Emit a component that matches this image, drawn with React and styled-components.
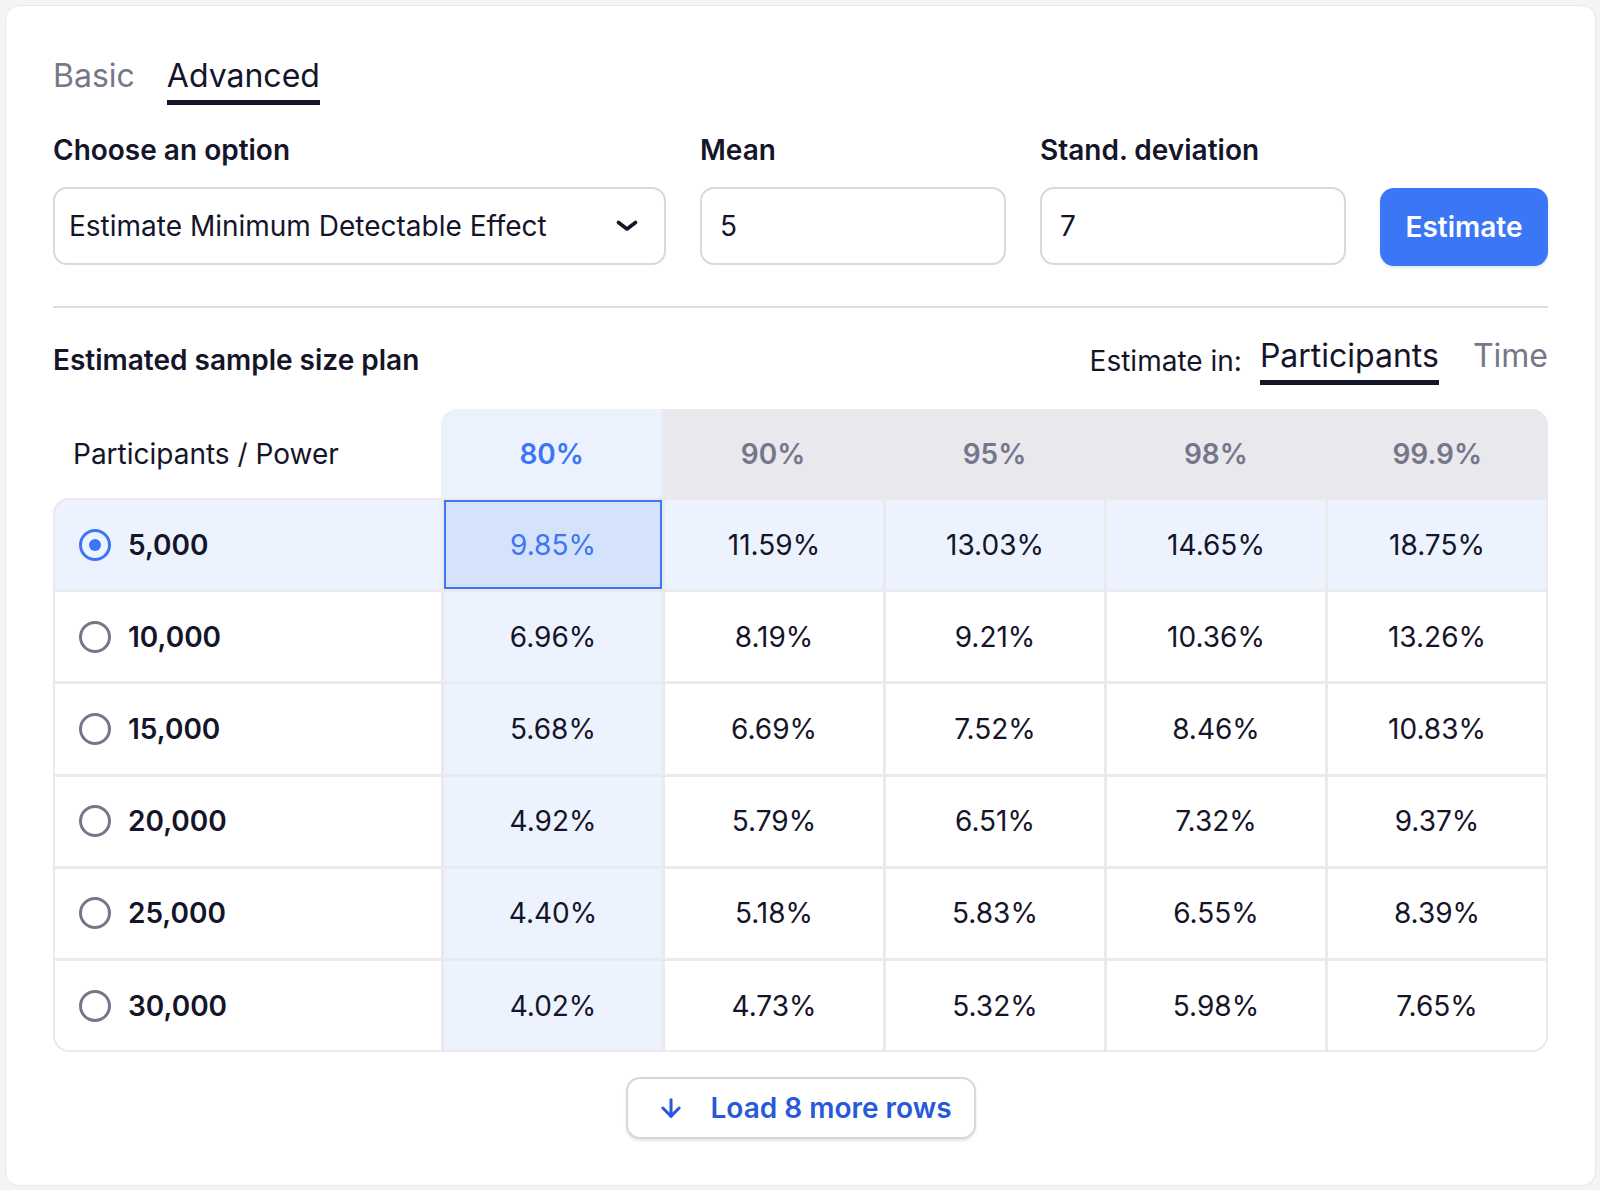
import React, { useState } from 'react'
import styled, { createGlobalStyle } from 'styled-components'
import { ArrowDown } from 'lucide-react'

const GlobalStyle = createGlobalStyle`
  html, body {
    margin: 0;
    padding: 0;
    background: #f4f4f6;
  }
  body {
    font-family: Inter, "Noto Sans", sans-serif;
    color: #15152a;
    -webkit-font-smoothing: antialiased;
  }
  * {
    box-sizing: border-box;
  }
`

const Card = styled.div`
  margin: 5px 4px 4px 5px;
  width: 1591px;
  height: 1181px;
  background: #fff;
  border: 1px solid #e7e7ec;
  border-radius: 14px;
  padding: 50px 47px 0;
`

const TabRow = styled.div`
  display: flex;
  align-items: center;
  gap: ${p => p.gap ?? 32}px;
  margin-bottom: ${p => p.mb ?? 0}px;
`

const Tab = styled.button`
  font: inherit;
  font-size: 32px;
  line-height: 40px;
  background: none;
  border: none;
  padding: 0 0 4px;
  margin: 0;
  cursor: pointer;
  border-bottom: 5px solid ${p => (p.active ? '#15152a' : 'transparent')};
  color: ${p => (p.active ? '#15152a' : '#777789')};
`

const FormGrid = styled.div`
  display: grid;
  grid-template-columns: 613px 306px 306px 1fr;
  column-gap: 34px;
  align-items: end;
`

const Label = styled.div`
  font-size: 28px;
  font-weight: 600;
  line-height: 34px;
  margin-bottom: 20px;
`

const Field = styled.div`
  display: flex;
  flex-direction: column;
`

const SelectBox = styled.div`
  height: 78px;
  border: 2px solid #d8d8de;
  border-radius: 14px;
  display: flex;
  align-items: center;
  justify-content: space-between;
  padding: 0 26px 0 14px;
  font-size: 28px;
  cursor: pointer;
`

const Input = styled.input`
  height: 78px;
  width: 100%;
  border: 2px solid #d8d8de;
  border-radius: 14px;
  padding: 0 18px;
  font: inherit;
  font-size: 28px;
  color: #15152a;
  outline: none;
`

const PrimaryButton = styled.button`
  height: 78px;
  margin-bottom: -1px;
  border: none;
  border-radius: 14px;
  background: #3b76f6;
  color: #fff;
  font: inherit;
  font-size: 28px;
  font-weight: 600;
  cursor: pointer;
  box-shadow: 0 2px 3px rgba(30, 60, 140, 0.12);
`

const Divider = styled.hr`
  border: none;
  height: 2px;
  background: #dddde3;
  margin: 41px 0 27px;
`

const SectionHead = styled.div`
  display: flex;
  align-items: center;
  justify-content: space-between;
  height: 50px;
  margin-bottom: 24px;
`

const Title = styled.div`
  font-size: 28px;
  font-weight: 600;
`

const Muted = styled.span`
  font-size: 28px;
  margin-right: 18px;
  margin-top: 2px;
`

const HeadRow = styled.div`
  display: grid;
  grid-template-columns: 388px repeat(5, 1fr);
  height: 89px;
`

const HeadCell = styled.div`
  display: flex;
  align-items: center;
  justify-content: ${p => (p.first ? 'flex-start' : 'center')};
  padding-left: ${p => (p.first ? 20 : 0)}px;
  font-size: 28px;
  font-weight: ${p => (p.first ? 400 : 600)};
  color: ${p => (p.first ? '#15152a' : p.active ? '#3b76f6' : '#76768a')};
  background: ${p => (p.first ? 'transparent' : p.active ? '#ecf2fd' : '#e8e8ed')};
  border-top-left-radius: ${p => (p.active ? 16 : 0)}px;
  border-top-right-radius: ${p => (p.last ? 16 : 0)}px;
`

const Body = styled.div`
  display: grid;
  grid-template-columns: 386px repeat(5, 1fr);
  gap: 3px;
  background: #e9e9ee;
  border: 2px solid #e9e9ee;
  border-radius: 16px 0 16px 16px;
  overflow: hidden;
`

const Cell = styled.div`
  height: 89.2px;
  display: flex;
  align-items: center;
  justify-content: center;
  font-size: 28px;
  background: ${p => (p.selected ? '#d4e2fb' : p.tint ? '#edf3fe' : '#fff')};
  color: ${p => (p.selected ? '#3b76f6' : '#15152a')};
  box-shadow: ${p => (p.selected ? 'inset 0 0 0 2px #3b76f6' : 'none')};
`

const RowLabel = styled.label`
  height: 89.2px;
  display: flex;
  align-items: center;
  gap: 17px;
  padding-left: 24px;
  font-size: 28px;
  font-weight: 600;
  cursor: pointer;
  background: ${p => (p.tint ? '#edf3fe' : '#fff')};
`

const Radio = styled.span`
  width: 32px;
  height: 32px;
  border-radius: 50%;
  border: 3.5px solid ${p => (p.checked ? '#3b76f6' : '#76768a')};
  display: flex;
  align-items: center;
  justify-content: center;
  &::after {
    content: '';
    width: 12px;
    height: 12px;
    border-radius: 50%;
    background: #3b76f6;
    display: ${p => (p.checked ? 'block' : 'none')};
  }
`

const LoadWrap = styled.div`
  display: flex;
  justify-content: center;
  margin-top: 25px;
`

const LoadButton = styled.button`
  width: 350px;
  height: 62px;
  display: flex;
  align-items: center;
  gap: 26px;
  padding: 0 0 0 29px;
  background: #fff;
  border: 2px solid #d6d6dc;
  border-radius: 14px;
  box-shadow: 0 2px 3px rgba(20, 20, 40, 0.1);
  color: #2759d9;
  font: inherit;
  font-size: 28px;
  font-weight: 600;
  cursor: pointer;
`

const powers = ['80%', '90%', '95%', '98%', '99.9%']

const rows = [
  ['5,000', ['9.85%', '11.59%', '13.03%', '14.65%', '18.75%']],
  ['10,000', ['6.96%', '8.19%', '9.21%', '10.36%', '13.26%']],
  ['15,000', ['5.68%', '6.69%', '7.52%', '8.46%', '10.83%']],
  ['20,000', ['4.92%', '5.79%', '6.51%', '7.32%', '9.37%']],
  ['25,000', ['4.40%', '5.18%', '5.83%', '6.55%', '8.39%']],
  ['30,000', ['4.02%', '4.73%', '5.32%', '5.98%', '7.65%']]
]

const Chevron = () => (
  <svg width="22" height="12" viewBox="0 0 22 12" fill="none">
    <path d="M2.5 2.5 L11 9 L19.5 2.5" stroke="#15152a" strokeWidth="3.6" strokeLinecap="round" strokeLinejoin="round" />
  </svg>
)

export default function App() {
  const [mode, setMode] = useState('advanced')
  const [unit, setUnit] = useState('participants')
  const [selected, setSelected] = useState(0)

  return (
    <Card>
      <GlobalStyle />

      <TabRow mb={28}>
        <Tab active={mode === 'basic'} onClick={() => setMode('basic')}>Basic</Tab>
        <Tab active={mode === 'advanced'} onClick={() => setMode('advanced')}>Advanced</Tab>
      </TabRow>

      <FormGrid>
        <Field>
          <Label>Choose an option</Label>
          <SelectBox>
            Estimate Minimum Detectable Effect
            <Chevron />
          </SelectBox>
        </Field>
        <Field>
          <Label>Mean</Label>
          <Input defaultValue="5" />
        </Field>
        <Field>
          <Label>Stand. deviation</Label>
          <Input defaultValue="7" />
        </Field>
        <PrimaryButton>Estimate</PrimaryButton>
      </FormGrid>

      <Divider />

      <SectionHead>
        <Title>Estimated sample size plan</Title>
        <TabRow gap={0}>
          <Muted>Estimate in:</Muted>
          <TabRow gap={34}>
            <Tab active={unit === 'participants'} onClick={() => setUnit('participants')}>Participants</Tab>
            <Tab active={unit === 'time'} onClick={() => setUnit('time')}>Time</Tab>
          </TabRow>
        </TabRow>
      </SectionHead>

      <HeadRow>
        <HeadCell first>Participants / Power</HeadCell>
        {powers.map((p, i) => (
          <HeadCell key={p} active={i === 0} last={i === powers.length - 1}>{p}</HeadCell>
        ))}
      </HeadRow>

      <Body>
        {rows.map(([label, values], r) => (
          <React.Fragment key={label}>
            <RowLabel tint={r === selected} onClick={() => setSelected(r)}>
              <Radio checked={r === selected} />
              {label}
            </RowLabel>
            {values.map((v, c) => (
              <Cell key={c} tint={r === selected || c === 0} selected={r === selected && c === 0}>{v}</Cell>
            ))}
          </React.Fragment>
        ))}
      </Body>

      <LoadWrap>
        <LoadButton>
          <ArrowDown size={28} strokeWidth={2.6} />
          Load 8 more rows
        </LoadButton>
      </LoadWrap>
    </Card>
  )
}
